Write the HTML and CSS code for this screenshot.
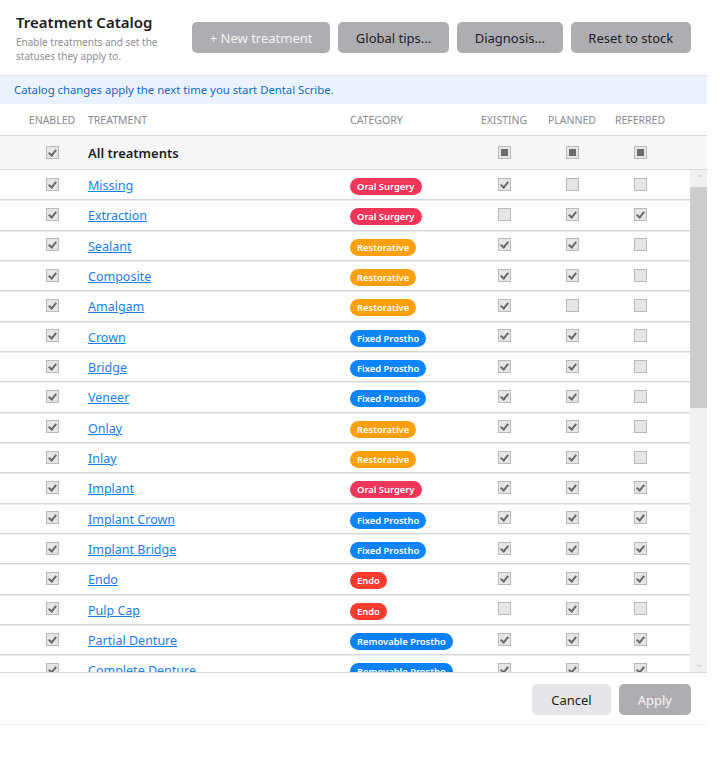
FILE: index.html
```html
<!DOCTYPE html>
<html>
<head>
  <meta charset="utf-8">
  <title>Treatment Catalog</title>
  <link rel="stylesheet" href="styles.css">
</head>
<body>
  <div class="dialog">
    <div class="top">
      <div class="intro">
        <h1>Treatment Catalog</h1>
        <p>Enable treatments and set the statuses they apply to.</p>
      </div>
      <div class="actions">
        <button class="btn btn-light">+ New treatment</button>
        <button class="btn">Global tips...</button>
        <button class="btn">Diagnosis...</button>
        <button class="btn">Reset to stock</button>
      </div>
    </div>
    <div class="notice">Catalog changes apply the next time you start Dental Scribe.</div>
    <div class="grid head">
      <div class="c">Enabled</div>
      <div>Treatment</div>
      <div>Category</div>
      <div class="c">Existing</div>
      <div class="c">Planned</div>
      <div class="c">Referred</div>
    </div>
    <div class="grid all">
      <div class="c"><span class="cb on"></span></div>
      <div class="all-label">All treatments</div>
      <div></div>
      <div class="c"><span class="cb mixed"></span></div>
      <div class="c"><span class="cb mixed"></span></div>
      <div class="c"><span class="cb mixed"></span></div>
    </div>
    <div class="body">
      <div class="list" id="list"></div>
      <div class="scrollbar">
        <div class="arrow">&#8963;</div>
        <div class="track"><div class="thumb"></div></div>
        <div class="arrow">&#8964;</div>
      </div>
    </div>
    <div class="footer">
      <button class="btn btn-cancel">Cancel</button>
      <button class="btn btn-light">Apply</button>
    </div>
  </div>
  <script>
  const cats = {
      os: ['Oral Surgery', 'b-os'],
      re: ['Restorative', 'b-re'],
      fp: ['Fixed Prostho', 'b-fp'],
      en: ['Endo', 'b-en'],
      rp: ['Removable Prostho', 'b-rp']
  };
  const rows = [
      ['Missing', 'os', 1, 0, 0],
      ['Extraction', 'os', 0, 1, 1],
      ['Sealant', 're', 1, 1, 0],
      ['Composite', 're', 1, 1, 0],
      ['Amalgam', 're', 1, 0, 0],
      ['Crown', 'fp', 1, 1, 0],
      ['Bridge', 'fp', 1, 1, 0],
      ['Veneer', 'fp', 1, 1, 0],
      ['Onlay', 're', 1, 1, 0],
      ['Inlay', 're', 1, 1, 0],
      ['Implant', 'os', 1, 1, 1],
      ['Implant Crown', 'fp', 1, 1, 1],
      ['Implant Bridge', 'fp', 1, 1, 1],
      ['Endo', 'en', 1, 1, 1],
      ['Pulp Cap', 'en', 0, 1, 0],
      ['Partial Denture', 'rp', 1, 1, 1],
      ['Complete Denture', 'rp', 1, 1, 1]
  ];
  const cb = on => `<div class="c"><span class="cb${on ? ' on' : ''}"></span></div>`;
  document.getElementById('list').innerHTML = rows.map(r => {
      const cat = cats[r[1]];
      return `<div class="grid row">
          ${cb(1)}
          <div><a href="#">${r[0]}</a></div>
          <div><span class="badge ${cat[1]}">${cat[0]}</span></div>
          ${cb(r[2])}${cb(r[3])}${cb(r[4])}
      </div>`;
  }).join('');
  </script>
</body>
</html>
```

FILE: styles.css
```css
body {
    margin: 0;
    background: #fff;
    font-family: "Noto Sans", "Open Sans", Arial, sans-serif;
    color: #1d1d1f;
}
.dialog {
    width: 707px;
}
.top {
    display: flex;
    justify-content: space-between;
    padding: 12px 16px 0 16px;
    height: 63px;
}
.intro h1 {
    margin: 0;
    font-size: 15px;
    font-weight: 600;
    line-height: 20px;
}
.intro p {
    margin: 3px 0 0;
    width: 160px;
    font-size: 10px;
    line-height: 14px;
    color: #8e8e93;
}
.actions {
    display: flex;
    gap: 8px;
    padding-top: 10px;
}
.btn {
    height: 31px;
    padding: 0 17.7px;
    border: 0;
    border-radius: 5px;
    background: #aeaeb2;
    color: #1d1d1f;
    font-family: inherit;
    font-size: 13px;
}
.btn-light {
    color: #f4f4f6;
}
.notice {
    border-top: 1px solid #dde1e8;
    background: #eaf3fd;
    color: #1769c4;
    font-size: 11.3px;
    padding: 0 14px;
    height: 28px;
    line-height: 28px;
}
.grid {
    display: grid;
    grid-template-columns: 72px 262px 120px 68px 68px 68px;
    padding-left: 16px;
    align-items: center;
}
.c {
    display: flex;
    justify-content: center;
}
.head {
    height: 31px;
    border-bottom: 1px solid #d8d8dc;
    font-size: 10.5px;
    text-transform: uppercase;
    color: #8a8a8e;
}
.all {
    height: 33px;
    background: #f6f6f8;
    border-bottom: 1px solid #d8d8dc;
}
.all-label {
    font-size: 13px;
    font-weight: 600;
}
.body {
    display: flex;
    height: 502px;
}
.list {
    flex: 1;
    overflow: hidden;
}
.row {
    height: 30.33px;
    box-sizing: border-box;
    border-bottom: 1px solid #d6d6da;
    border-top: 1px solid #ececee;
    padding-bottom: 2px;
}
.row:first-child {
    border-top: 0;
    padding-bottom: 1px;
}
.row a {
    color: #1a7ee6;
    font-size: 12.5px;
}
.cb {
    display: block;
    width: 11px;
    height: 11px;
    border: 1px solid #b9b9bd;
    background: #e6e6e8;
    position: relative;
}
.cb.on::after {
    content: "";
    position: absolute;
    left: 3px;
    top: 1px;
    width: 3px;
    height: 6px;
    border: solid #68686c;
    border-width: 0 2px 2px 0;
    transform: rotate(40deg);
}
.cb.mixed::after {
    content: "";
    position: absolute;
    left: 2px;
    top: 2px;
    width: 7px;
    height: 7px;
    background: #6b6b6f;
}
.badge {
    display: inline-block;
    height: 17px;
    line-height: 17px;
    padding: 0 7px;
    border-radius: 9px;
    color: #fff;
    font-size: 9.4px;
    font-weight: 600;
}
.b-os { background: #f1365a; }
.b-re { background: #ff9f0a; }
.b-fp { background: #0a84ff; }
.b-en { background: #ff3b30; }
.b-rp { background: #0a80f5; }
.scrollbar {
    width: 17px;
    display: flex;
    flex-direction: column;
    background: #f0f0f0;
}
.arrow {
    height: 17px;
    font-size: 10px;
    line-height: 17px;
    text-align: center;
    color: #c8c8c8;
}
.track {
    flex: 1;
}
.thumb {
    height: 221px;
    background: #cdcdcd;
}
.footer {
    display: flex;
    justify-content: flex-end;
    gap: 8px;
    padding: 11px 16px 0;
    height: 40px;
    border-top: 1px solid #d8d8dc;
    border-bottom: 1px solid #f2f2f4;
}
.btn-cancel {
    background: #e5e5ea;
    height: 31px;
}
.footer .btn {
    padding: 0 19px;
}
```
